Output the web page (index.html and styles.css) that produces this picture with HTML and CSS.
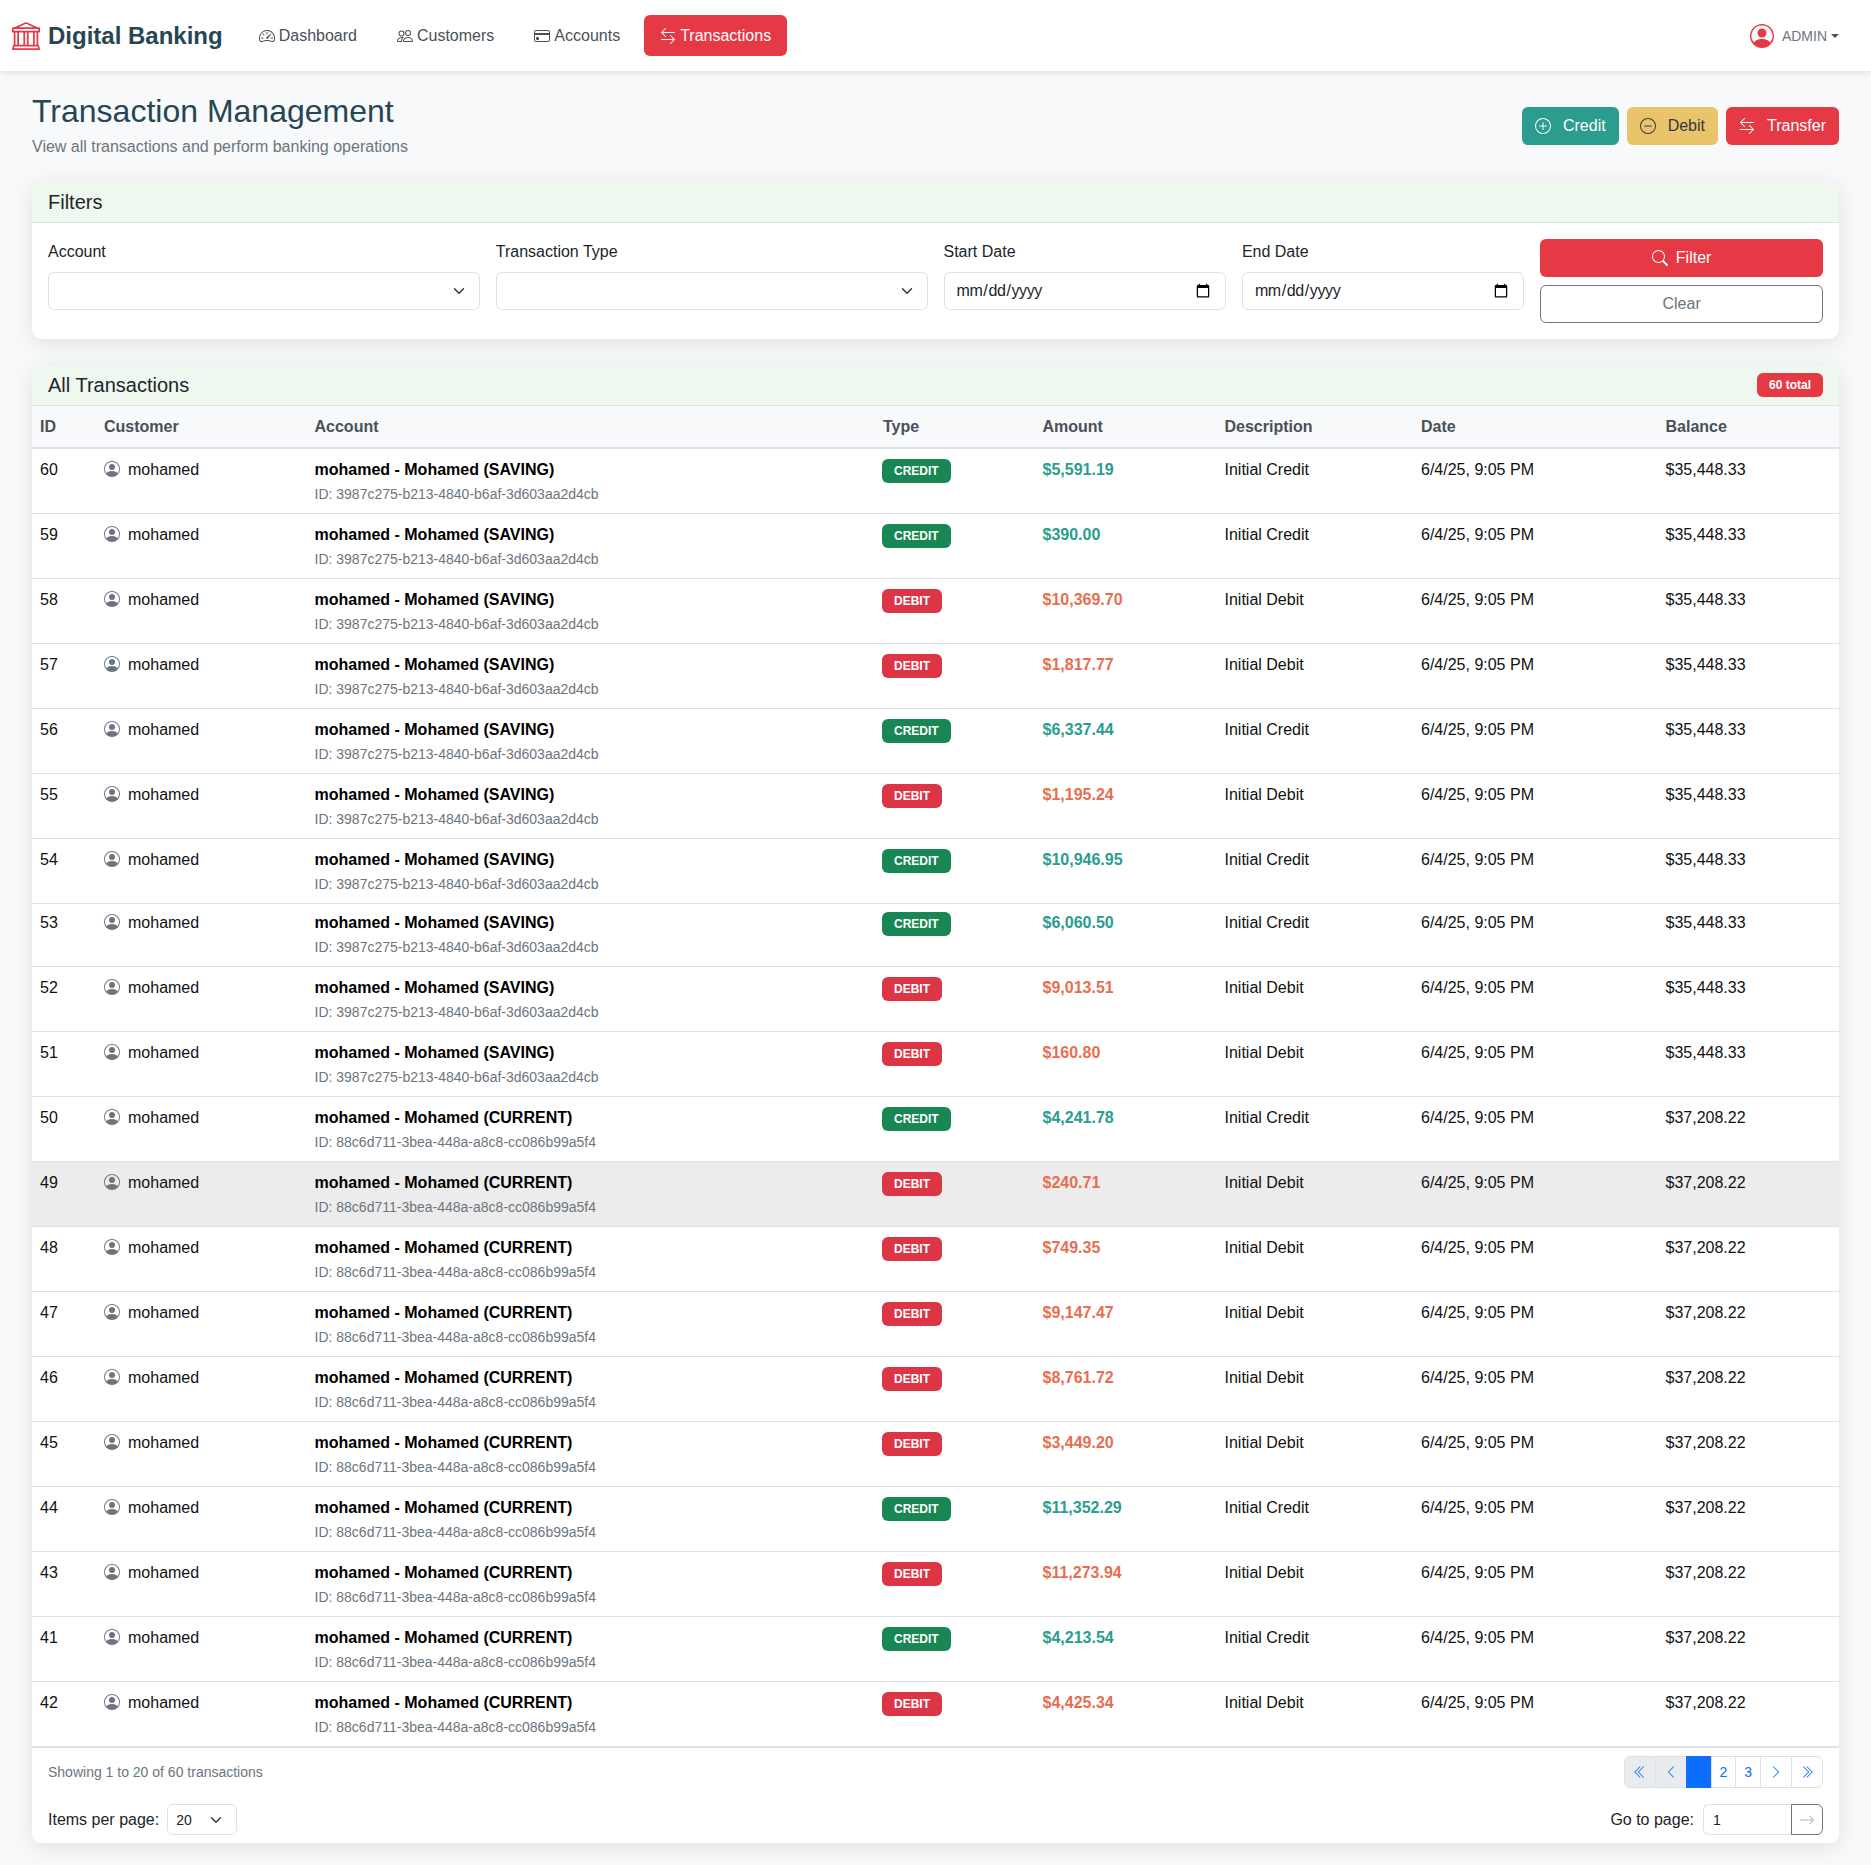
FILE: index.html
```html
<!DOCTYPE html>
<html lang="en">
<head>
    <meta charset="UTF-8">
    <meta name="viewport" content="width=device-width, initial-scale=1.0">
    <title>Digital Banking - Transactions</title>
    <link rel="stylesheet" href="styles.css">
</head>
<body>
    <!-- icon sprite -->
    <svg class="sprite" xmlns="http://www.w3.org/2000/svg">
        <symbol id="i-bank" viewBox="0 0 16 16"><path d="m8 0 6.61 3h.89a.5.5 0 0 1 .5.5v2a.5.5 0 0 1-.5.5H15v7a.5.5 0 0 1 .485.38l.5 2a.498.498 0 0 1-.485.62H.5a.498.498 0 0 1-.485-.62l.5-2A.5.5 0 0 1 1 13V6H.5a.5.5 0 0 1-.5-.5v-2A.5.5 0 0 1 .5 3h.89zM3.777 3h8.447L8 1zM2 6v7h1V6zm2 0v7h2.5V6zm3.5 0v7h1V6zm2 0v7H12V6zM13 6v7h1V6zm2-1V4H1v1zm-.39 9H1.39l-.25 1h13.72z"/></symbol>
        <symbol id="i-speed" viewBox="0 0 16 16"><path d="M8 4a.5.5 0 0 1 .5.5V6a.5.5 0 0 1-1 0V4.5A.5.5 0 0 1 8 4M3.732 5.732a.5.5 0 0 1 .707 0l.915.914a.5.5 0 1 1-.708.708l-.914-.915a.5.5 0 0 1 0-.707M2 10a.5.5 0 0 1 .5-.5h1.586a.5.5 0 0 1 0 1H2.5A.5.5 0 0 1 2 10m9.5 0a.5.5 0 0 1 .5-.5h1.5a.5.5 0 0 1 0 1H12a.5.5 0 0 1-.5-.5m.754-4.246a.39.39 0 0 0-.527-.02L7.547 9.31a.91.91 0 1 0 1.302 1.258l3.434-4.297a.39.39 0 0 0-.029-.518z"/><path fill-rule="evenodd" d="M0 10a8 8 0 1 1 15.547 2.661c-.442 1.253-1.845 1.602-2.932 1.25C11.309 13.488 9.475 13 8 13c-1.474 0-3.31.488-4.615.911-1.087.352-2.49.003-2.932-1.25A8 8 0 0 1 0 10m8-7a7 7 0 0 0-6.603 9.329c.203.575.923.876 1.68.63C4.397 12.533 6.358 12 8 12s3.604.532 4.923.96c.757.245 1.477-.056 1.68-.631A7 7 0 0 0 8 3"/></symbol>
        <symbol id="i-people" viewBox="0 0 16 16"><path d="M15 14s1 0 1-1-1-4-5-4-5 3-5 4 1 1 1 1zm-7.978-1L7 12.996c.001-.264.167-1.03.76-1.72C8.312 10.629 9.282 10 11 10c1.717 0 2.687.63 3.24 1.276.593.69.758 1.457.76 1.72l-.008.002-.014.002zM11 7a2 2 0 1 0 0-4 2 2 0 0 0 0 4m3-2a3 3 0 1 1-6 0 3 3 0 0 1 6 0M6.936 9.28a6 6 0 0 0-1.23-.247A7 7 0 0 0 5 9c-4 0-5 3-5 4q0 1 1 1h4.216A2.24 2.24 0 0 1 5 13c0-1.01.377-2.042 1.09-2.904.243-.294.526-.569.846-.816M4.92 10A5.5 5.5 0 0 0 4 13H1c0-.26.164-1.03.76-1.724.545-.636 1.492-1.256 3.16-1.275ZM1.5 5.5a3 3 0 1 1 6 0 3 3 0 0 1-6 0m3-2a2 2 0 1 0 0 4 2 2 0 0 0 0-4"/></symbol>
        <symbol id="i-card" viewBox="0 0 16 16"><path d="M0 4a2 2 0 0 1 2-2h12a2 2 0 0 1 2 2v8a2 2 0 0 1-2 2H2a2 2 0 0 1-2-2zm2-1a1 1 0 0 0-1 1v1h14V4a1 1 0 0 0-1-1zm13 4H1v5a1 1 0 0 0 1 1h12a1 1 0 0 0 1-1z"/><path d="M2 10a1 1 0 0 1 1-1h1a1 1 0 0 1 1 1v1a1 1 0 0 1-1 1H3a1 1 0 0 1-1-1z"/></symbol>
        <symbol id="i-swap" viewBox="0 0 16 16"><path fill-rule="evenodd" d="M1 11.5a.5.5 0 0 0 .5.5h11.793l-3.147 3.146a.5.5 0 0 0 .708.708l4-4a.5.5 0 0 0 0-.708l-4-4a.5.5 0 0 0-.708.708L13.293 11H1.5a.5.5 0 0 0-.5.5m14-7a.5.5 0 0 1-.5.5H2.707l3.147 3.146a.5.5 0 1 1-.708.708l-4-4a.5.5 0 0 1 0-.708l4-4a.5.5 0 1 1 .708.708L2.707 4H14.5a.5.5 0 0 1 .5.5"/></symbol>
        <symbol id="i-person" viewBox="0 0 16 16"><path d="M11 6a3 3 0 1 1-6 0 3 3 0 0 1 6 0"/><path fill-rule="evenodd" d="M0 8a8 8 0 1 1 16 0A8 8 0 0 1 0 8m8-7a7 7 0 0 0-5.468 11.37C3.242 11.226 4.805 10 8 10s4.757 1.225 5.468 2.37A7 7 0 0 0 8 1"/></symbol>
        <symbol id="i-plus" viewBox="0 0 16 16"><path d="M8 15A7 7 0 1 1 8 1a7 7 0 0 1 0 14m0 1A8 8 0 1 0 8 0a8 8 0 0 0 0 16"/><path d="M8 4a.5.5 0 0 1 .5.5v3h3a.5.5 0 0 1 0 1h-3v3a.5.5 0 0 1-1 0v-3h-3a.5.5 0 0 1 0-1h3v-3A.5.5 0 0 1 8 4"/></symbol>
        <symbol id="i-minus" viewBox="0 0 16 16"><path d="M8 15A7 7 0 1 1 8 1a7 7 0 0 1 0 14m0 1A8 8 0 1 0 8 0a8 8 0 0 0 0 16"/><path d="M4 8a.5.5 0 0 1 .5-.5h7a.5.5 0 0 1 0 1h-7A.5.5 0 0 1 4 8"/></symbol>
        <symbol id="i-search" viewBox="0 0 16 16"><path d="M11.742 10.344a6.5 6.5 0 1 0-1.397 1.398h-.001q.044.06.098.115l3.85 3.85a1 1 0 0 0 1.415-1.414l-3.85-3.85a1 1 0 0 0-.115-.1zM12 6.5a5.5 5.5 0 1 1-11 0 5.5 5.5 0 0 1 11 0"/></symbol>
        <symbol id="i-first" viewBox="0 0 16 16"><path fill-rule="evenodd" d="M8.354 1.646a.5.5 0 0 1 0 .708L2.707 8l5.647 5.646a.5.5 0 0 1-.708.708l-6-6a.5.5 0 0 1 0-.708l6-6a.5.5 0 0 1 .708 0"/><path fill-rule="evenodd" d="M12.354 1.646a.5.5 0 0 1 0 .708L6.707 8l5.647 5.646a.5.5 0 0 1-.708.708l-6-6a.5.5 0 0 1 0-.708l6-6a.5.5 0 0 1 .708 0"/></symbol>
        <symbol id="i-prev" viewBox="0 0 16 16"><path fill-rule="evenodd" d="M11.354 1.646a.5.5 0 0 1 0 .708L5.707 8l5.647 5.646a.5.5 0 0 1-.708.708l-6-6a.5.5 0 0 1 0-.708l6-6a.5.5 0 0 1 .708 0"/></symbol>
        <symbol id="i-next" viewBox="0 0 16 16"><path fill-rule="evenodd" d="M4.646 1.646a.5.5 0 0 1 .708 0l6 6a.5.5 0 0 1 0 .708l-6 6a.5.5 0 0 1-.708-.708L10.293 8 4.646 2.354a.5.5 0 0 1 0-.708"/></symbol>
        <symbol id="i-last" viewBox="0 0 16 16"><path fill-rule="evenodd" d="M3.646 1.646a.5.5 0 0 1 .708 0l6 6a.5.5 0 0 1 0 .708l-6 6a.5.5 0 0 1-.708-.708L9.293 8 3.646 2.354a.5.5 0 0 1 0-.708"/><path fill-rule="evenodd" d="M7.646 1.646a.5.5 0 0 1 .708 0l6 6a.5.5 0 0 1 0 .708l-6 6a.5.5 0 0 1-.708-.708L13.293 8 7.646 2.354a.5.5 0 0 1 0-.708"/></symbol>
        <symbol id="i-go" viewBox="0 0 16 16"><path fill-rule="evenodd" d="M1 8a.5.5 0 0 1 .5-.5h11.793l-3.147-3.146a.5.5 0 0 1 .708-.708l4 4a.5.5 0 0 1 0 .708l-4 4a.5.5 0 0 1-.708-.708L13.293 8.5H1.5A.5.5 0 0 1 1 8"/></symbol>
    </svg>

    <nav class="navbar">
        <a class="brand" href="#"><svg class="brand-icon"><use href="#i-bank"/></svg>Digital Banking</a>
        <a class="nav-link" href="#"><svg class="icon"><use href="#i-speed"/></svg>Dashboard</a>
        <a class="nav-link" href="#"><svg class="icon"><use href="#i-people"/></svg>Customers</a>
        <a class="nav-link" href="#"><svg class="icon"><use href="#i-card"/></svg>Accounts</a>
        <a class="nav-link active" href="#"><svg class="icon"><use href="#i-swap"/></svg>Transactions</a>
        <a class="user-menu" href="#"><svg class="user-icon"><use href="#i-person"/></svg>ADMIN<span class="caret"></span></a>
    </nav>

    <main class="page">
        <div class="page-head">
            <div>
                <h2 class="page-title">Transaction Management</h2>
                <p class="page-sub">View all transactions and perform banking operations</p>
            </div>
            <div class="page-actions">
                <a class="btn btn-credit" href="#"><svg class="icon"><use href="#i-plus"/></svg>Credit</a>
                <a class="btn btn-debit" href="#"><svg class="icon"><use href="#i-minus"/></svg>Debit</a>
                <a class="btn btn-transfer" href="#"><svg class="icon"><use href="#i-swap"/></svg>Transfer</a>
            </div>
        </div>

        <section class="card filters">
            <div class="card-header"><h5>Filters</h5></div>
            <form class="filter-row">
                <div class="filter-col">
                    <label>Account</label>
                    <select class="field"><option></option></select>
                </div>
                <div class="filter-col">
                    <label>Transaction Type</label>
                    <select class="field"><option></option></select>
                </div>
                <div class="filter-col">
                    <label>Start Date</label>
                    <input class="field" type="date">
                </div>
                <div class="filter-col">
                    <label>End Date</label>
                    <input class="field" type="date">
                </div>
                <div class="filter-col filter-btns">
                    <button class="btn btn-transfer" type="button"><svg class="icon"><use href="#i-search"/></svg>Filter</button>
                    <button class="btn btn-clear" type="button">Clear</button>
                </div>
            </form>
        </section>

        <section class="card">
            <div class="card-header">
                <h5>All Transactions</h5>
                <span class="total-badge">60 total</span>
            </div>
            <table class="tx-table">
                <colgroup>
                    <col class="c-id"><col class="c-customer"><col class="c-account"><col class="c-type">
                    <col class="c-amount"><col class="c-desc"><col class="c-date"><col class="c-balance">
                </colgroup>
                <thead>
                    <tr><th>ID</th><th>Customer</th><th>Account</th><th>Type</th><th>Amount</th><th>Description</th><th>Date</th><th>Balance</th></tr>
                </thead>
                <tbody>
                    <tr><td>60</td><td><svg class="person"><use href="#i-person"/></svg>mohamed</td><td><b>mohamed - Mohamed (SAVING)</b><small>ID: 3987c275-b213-4840-b6af-3d603aa2d4cb</small></td><td><span class="badge credit">CREDIT</span></td><td class="amt-credit">$5,591.19</td><td>Initial Credit</td><td>6/4/25, 9:05 PM</td><td>$35,448.33</td></tr>
                    <tr><td>59</td><td><svg class="person"><use href="#i-person"/></svg>mohamed</td><td><b>mohamed - Mohamed (SAVING)</b><small>ID: 3987c275-b213-4840-b6af-3d603aa2d4cb</small></td><td><span class="badge credit">CREDIT</span></td><td class="amt-credit">$390.00</td><td>Initial Credit</td><td>6/4/25, 9:05 PM</td><td>$35,448.33</td></tr>
                    <tr><td>58</td><td><svg class="person"><use href="#i-person"/></svg>mohamed</td><td><b>mohamed - Mohamed (SAVING)</b><small>ID: 3987c275-b213-4840-b6af-3d603aa2d4cb</small></td><td><span class="badge debit">DEBIT</span></td><td class="amt-debit">$10,369.70</td><td>Initial Debit</td><td>6/4/25, 9:05 PM</td><td>$35,448.33</td></tr>
                    <tr><td>57</td><td><svg class="person"><use href="#i-person"/></svg>mohamed</td><td><b>mohamed - Mohamed (SAVING)</b><small>ID: 3987c275-b213-4840-b6af-3d603aa2d4cb</small></td><td><span class="badge debit">DEBIT</span></td><td class="amt-debit">$1,817.77</td><td>Initial Debit</td><td>6/4/25, 9:05 PM</td><td>$35,448.33</td></tr>
                    <tr><td>56</td><td><svg class="person"><use href="#i-person"/></svg>mohamed</td><td><b>mohamed - Mohamed (SAVING)</b><small>ID: 3987c275-b213-4840-b6af-3d603aa2d4cb</small></td><td><span class="badge credit">CREDIT</span></td><td class="amt-credit">$6,337.44</td><td>Initial Credit</td><td>6/4/25, 9:05 PM</td><td>$35,448.33</td></tr>
                    <tr><td>55</td><td><svg class="person"><use href="#i-person"/></svg>mohamed</td><td><b>mohamed - Mohamed (SAVING)</b><small>ID: 3987c275-b213-4840-b6af-3d603aa2d4cb</small></td><td><span class="badge debit">DEBIT</span></td><td class="amt-debit">$1,195.24</td><td>Initial Debit</td><td>6/4/25, 9:05 PM</td><td>$35,448.33</td></tr>
                    <tr><td>54</td><td><svg class="person"><use href="#i-person"/></svg>mohamed</td><td><b>mohamed - Mohamed (SAVING)</b><small>ID: 3987c275-b213-4840-b6af-3d603aa2d4cb</small></td><td><span class="badge credit">CREDIT</span></td><td class="amt-credit">$10,946.95</td><td>Initial Credit</td><td>6/4/25, 9:05 PM</td><td>$35,448.33</td></tr>
                    <tr class="row-short"><td>53</td><td><svg class="person"><use href="#i-person"/></svg>mohamed</td><td><b>mohamed - Mohamed (SAVING)</b><small>ID: 3987c275-b213-4840-b6af-3d603aa2d4cb</small></td><td><span class="badge credit">CREDIT</span></td><td class="amt-credit">$6,060.50</td><td>Initial Credit</td><td>6/4/25, 9:05 PM</td><td>$35,448.33</td></tr>
                    <tr><td>52</td><td><svg class="person"><use href="#i-person"/></svg>mohamed</td><td><b>mohamed - Mohamed (SAVING)</b><small>ID: 3987c275-b213-4840-b6af-3d603aa2d4cb</small></td><td><span class="badge debit">DEBIT</span></td><td class="amt-debit">$9,013.51</td><td>Initial Debit</td><td>6/4/25, 9:05 PM</td><td>$35,448.33</td></tr>
                    <tr><td>51</td><td><svg class="person"><use href="#i-person"/></svg>mohamed</td><td><b>mohamed - Mohamed (SAVING)</b><small>ID: 3987c275-b213-4840-b6af-3d603aa2d4cb</small></td><td><span class="badge debit">DEBIT</span></td><td class="amt-debit">$160.80</td><td>Initial Debit</td><td>6/4/25, 9:05 PM</td><td>$35,448.33</td></tr>
                    <tr><td>50</td><td><svg class="person"><use href="#i-person"/></svg>mohamed</td><td><b>mohamed - Mohamed (CURRENT)</b><small>ID: 88c6d711-3bea-448a-a8c8-cc086b99a5f4</small></td><td><span class="badge credit">CREDIT</span></td><td class="amt-credit">$4,241.78</td><td>Initial Credit</td><td>6/4/25, 9:05 PM</td><td>$37,208.22</td></tr>
                    <tr class="row-hover"><td>49</td><td><svg class="person"><use href="#i-person"/></svg>mohamed</td><td><b>mohamed - Mohamed (CURRENT)</b><small>ID: 88c6d711-3bea-448a-a8c8-cc086b99a5f4</small></td><td><span class="badge debit">DEBIT</span></td><td class="amt-debit">$240.71</td><td>Initial Debit</td><td>6/4/25, 9:05 PM</td><td>$37,208.22</td></tr>
                    <tr><td>48</td><td><svg class="person"><use href="#i-person"/></svg>mohamed</td><td><b>mohamed - Mohamed (CURRENT)</b><small>ID: 88c6d711-3bea-448a-a8c8-cc086b99a5f4</small></td><td><span class="badge debit">DEBIT</span></td><td class="amt-debit">$749.35</td><td>Initial Debit</td><td>6/4/25, 9:05 PM</td><td>$37,208.22</td></tr>
                    <tr><td>47</td><td><svg class="person"><use href="#i-person"/></svg>mohamed</td><td><b>mohamed - Mohamed (CURRENT)</b><small>ID: 88c6d711-3bea-448a-a8c8-cc086b99a5f4</small></td><td><span class="badge debit">DEBIT</span></td><td class="amt-debit">$9,147.47</td><td>Initial Debit</td><td>6/4/25, 9:05 PM</td><td>$37,208.22</td></tr>
                    <tr><td>46</td><td><svg class="person"><use href="#i-person"/></svg>mohamed</td><td><b>mohamed - Mohamed (CURRENT)</b><small>ID: 88c6d711-3bea-448a-a8c8-cc086b99a5f4</small></td><td><span class="badge debit">DEBIT</span></td><td class="amt-debit">$8,761.72</td><td>Initial Debit</td><td>6/4/25, 9:05 PM</td><td>$37,208.22</td></tr>
                    <tr><td>45</td><td><svg class="person"><use href="#i-person"/></svg>mohamed</td><td><b>mohamed - Mohamed (CURRENT)</b><small>ID: 88c6d711-3bea-448a-a8c8-cc086b99a5f4</small></td><td><span class="badge debit">DEBIT</span></td><td class="amt-debit">$3,449.20</td><td>Initial Debit</td><td>6/4/25, 9:05 PM</td><td>$37,208.22</td></tr>
                    <tr><td>44</td><td><svg class="person"><use href="#i-person"/></svg>mohamed</td><td><b>mohamed - Mohamed (CURRENT)</b><small>ID: 88c6d711-3bea-448a-a8c8-cc086b99a5f4</small></td><td><span class="badge credit">CREDIT</span></td><td class="amt-credit">$11,352.29</td><td>Initial Credit</td><td>6/4/25, 9:05 PM</td><td>$37,208.22</td></tr>
                    <tr><td>43</td><td><svg class="person"><use href="#i-person"/></svg>mohamed</td><td><b>mohamed - Mohamed (CURRENT)</b><small>ID: 88c6d711-3bea-448a-a8c8-cc086b99a5f4</small></td><td><span class="badge debit">DEBIT</span></td><td class="amt-debit">$11,273.94</td><td>Initial Debit</td><td>6/4/25, 9:05 PM</td><td>$37,208.22</td></tr>
                    <tr><td>41</td><td><svg class="person"><use href="#i-person"/></svg>mohamed</td><td><b>mohamed - Mohamed (CURRENT)</b><small>ID: 88c6d711-3bea-448a-a8c8-cc086b99a5f4</small></td><td><span class="badge credit">CREDIT</span></td><td class="amt-credit">$4,213.54</td><td>Initial Credit</td><td>6/4/25, 9:05 PM</td><td>$37,208.22</td></tr>
                    <tr><td>42</td><td><svg class="person"><use href="#i-person"/></svg>mohamed</td><td><b>mohamed - Mohamed (CURRENT)</b><small>ID: 88c6d711-3bea-448a-a8c8-cc086b99a5f4</small></td><td><span class="badge debit">DEBIT</span></td><td class="amt-debit">$4,425.34</td><td>Initial Debit</td><td>6/4/25, 9:05 PM</td><td>$37,208.22</td></tr>
                </tbody>
            </table>

            <div class="table-foot">
                <div class="foot-row">
                    <span class="showing">Showing 1 to 20 of 60 transactions</span>
                    <ul class="pager">
                        <li class="pg-icon off"><svg class="pg-svg"><use href="#i-first"/></svg></li>
                        <li class="pg-icon off"><svg class="pg-svg"><use href="#i-prev"/></svg></li>
                        <li class="pg-num current"></li>
                        <li class="pg-num">2</li>
                        <li class="pg-num">3</li>
                        <li class="pg-icon"><svg class="pg-svg"><use href="#i-next"/></svg></li>
                        <li class="pg-icon"><svg class="pg-svg"><use href="#i-last"/></svg></li>
                    </ul>
                </div>
                <div class="foot-row foot-row-2">
                    <div class="per-page">
                        <label>Items per page:</label>
                        <select class="field-sm"><option>20</option></select>
                    </div>
                    <div class="go-page">
                        <label>Go to page:</label>
                        <input class="go-input" type="text" value="1">
                        <button class="go-btn" type="button"><svg class="icon"><use href="#i-go"/></svg></button>
                    </div>
                </div>
            </div>
        </section>
    </main>
</body>
</html>
```

FILE: styles.css
```css
* {
    box-sizing: border-box;
}
body {
    margin: 0;
    font-family: "Liberation Sans", Arial, sans-serif;
    font-size: 16px;
    line-height: 24px;
    color: #212529;
    background-color: #f8f9fa;
}
a {
    text-decoration: none;
}
.sprite {
    display: none;
}
.icon {
    width: 16px;
    height: 16px;
    fill: currentColor;
    flex: none;
}

/* navbar */
.navbar {
    display: flex;
    align-items: center;
    gap: 8px;
    height: 71px;
    padding: 0 32px 0 12px;
    background-color: #fff;
    box-shadow: 0 2px 6px rgba(0, 0, 0, 0.1);
}
.brand {
    display: flex;
    align-items: center;
    gap: 8px;
    margin-right: 12px;
    font-size: 24px;
    font-weight: 700;
    color: #264653;
}
.brand-icon {
    width: 28px;
    height: 28px;
    fill: #e63946;
}
.nav-link {
    display: flex;
    align-items: center;
    gap: 4px;
    height: 41px;
    padding: 0 16px;
    border-radius: 6px;
    color: #495057;
}
.nav-link.active {
    background-color: #e63946;
    color: #fff;
}
.user-menu {
    display: flex;
    align-items: center;
    margin-left: auto;
    font-size: 14px;
    color: #6c757d;
}
.user-icon {
    width: 24px;
    height: 24px;
    margin-right: 8px;
    fill: #e63946;
}
.caret {
    margin-left: 4px;
    border-top: 4px solid #495057;
    border-left: 4px solid transparent;
    border-right: 4px solid transparent;
}

/* page head */
.page {
    padding: 21px 32px 22px;
}
.page-head {
    display: flex;
    justify-content: space-between;
    align-items: center;
    margin-bottom: 23px;
}
.page-title {
    margin: 0 0 5px;
    font-size: 32px;
    font-weight: 400;
    line-height: 38px;
    color: #264653;
}
.page-sub {
    margin: 0;
    color: #6c757d;
}
.page-actions {
    display: flex;
    gap: 8px;
}
.btn {
    display: flex;
    align-items: center;
    justify-content: center;
    height: 38px;
    padding: 0 12px;
    border: 1px solid transparent;
    border-radius: 6px;
    font-family: inherit;
    font-size: 16px;
    cursor: pointer;
}
.btn .icon {
    margin-right: 12px;
}
.btn-credit {
    background-color: #2a9d8f;
    color: #fff;
}
.btn-debit {
    background-color: #e9c46a;
    color: #343a40;
}
.btn-transfer {
    background-color: #e63946;
    color: #fff;
}
.btn-clear {
    background-color: #fff;
    border-color: #6c757d;
    color: #6c757d;
}

/* cards */
.card {
    margin-bottom: 26px;
    background-color: #fff;
    border-radius: 10px;
    box-shadow: 0 4px 20px rgba(0, 0, 0, 0.1);
    overflow: hidden;
}
.card:last-child {
    margin-bottom: 0;
    border-radius: 8px;
}
.card-header {
    display: flex;
    justify-content: space-between;
    align-items: center;
    height: 41px;
    padding: 0 16px;
    background-color: #eff8ef;
    border-bottom: 1px solid #dee2e6;
}
.card-header h5 {
    margin: 0;
    font-size: 20px;
    font-weight: 400;
    line-height: 24px;
}
.total-badge {
    padding: 0 12px;
    border-radius: 6px;
    background-color: #e63946;
    color: #fff;
    font-size: 12px;
    font-weight: 700;
}

/* filters */
.filter-row {
    display: grid;
    grid-template-columns: 25% 25% 16.66% 16.66% auto;
    margin: 0 -8px;
    padding: 16px 16px;
}
.filter-col {
    padding: 0 8px;
}
.filter-col label {
    display: block;
    padding-top: 1px;
    margin-bottom: 8px;
}
.field {
    display: block;
    width: 100%;
    height: 38px;
    padding: 6px 12px;
    border: 1px solid #dee2e6;
    border-radius: 6px;
    background-color: #fff;
    font-family: inherit;
    font-size: 16px;
    color: #212529;
}
.field::-webkit-datetime-edit {
    margin-left: -1px;
    letter-spacing: -0.4px;
}
select.field,
.field-sm {
    appearance: none;
    background-image: url("data:image/svg+xml,%3csvg xmlns='http://www.w3.org/2000/svg' viewBox='0 0 16 16'%3e%3cpath fill='none' stroke='%23343a40' stroke-linecap='round' stroke-linejoin='round' stroke-width='2' d='m2 5 6 6 6-6'/%3e%3c/svg%3e");
    background-repeat: no-repeat;
    background-position: right 12px center;
    background-size: 16px 12px;
}
.filter-btns {
    display: flex;
    flex-direction: column;
    gap: 8px;
}
.filter-btns .btn {
    width: 100%;
}
.filter-btns .icon {
    margin-right: 8px;
}

/* table */
.tx-table {
    width: 100%;
    border-collapse: collapse;
    table-layout: fixed;
}
.c-id { width: 64px; }
.c-customer { width: 210.5px; }
.c-account { width: 568.5px; }
.c-type { width: 159.5px; }
.c-amount { width: 182px; }
.c-desc { width: 196.5px; }
.c-date { width: 244.5px; }
.c-balance { width: 181.5px; }
.tx-table th {
    height: 42px;
    padding: 8px;
    text-align: left;
    font-weight: 700;
    color: #495057;
    background-color: #f8f9fa;
    border-bottom: 2px solid #dee2e6;
}
.tx-table td {
    padding: 9px 8px 8px;
    vertical-align: top;
    border-bottom: 1px solid #dee2e6;
    color: #111;
}
.tx-table b {
    display: block;
    color: #000;
}
.tx-table small {
    display: block;
    margin-top: 2px;
    font-size: 14px;
    line-height: 21px;
    color: #6c757d;
}
.tx-table .row-short td {
    padding-top: 7px;
}
.row-hover td {
    background-color: #ececec;
}
.person {
    width: 16px;
    height: 16px;
    margin-right: 8px;
    fill: #6c757d;
    vertical-align: -2px;
}
.badge {
    display: inline-block;
    margin: 1px 0 0 -1px;
    padding: 0 12px;
    border-radius: 6px;
    font-size: 12px;
    font-weight: 700;
    line-height: 24px;
    vertical-align: top;
    color: #fff;
}
.badge.credit {
    background-color: #198754;
}
.badge.debit {
    background-color: #dc3545;
}
.tx-table .amt-credit {
    font-weight: 700;
    color: #2a9d8f;
}
.tx-table .amt-debit {
    font-weight: 700;
    color: #e76f51;
}

/* pagination footer */
.table-foot {
    padding: 8px 16px 8px;
    border-top: 1px solid #dee2e6;
}
.foot-row {
    display: flex;
    justify-content: space-between;
    align-items: center;
}
.foot-row-2 {
    margin-top: 16px;
}
.showing {
    font-size: 14px;
    color: #6c757d;
}
.pager {
    display: flex;
    height: 32px;
    margin: 0;
    padding: 0;
    list-style: none;
    font-size: 14px;
    color: #0d6efd;
}
.pager li {
    display: flex;
    align-items: center;
    justify-content: center;
    margin-left: -1px;
    background-color: #fff;
    border: 1px solid #dee2e6;
}
.pager li:first-child {
    margin-left: 0;
    border-radius: 6px 0 0 6px;
}
.pager li:last-child {
    border-radius: 0 6px 6px 0;
}
.pg-num {
    width: 25.7px;
}
.pg-icon {
    width: 32px;
}
.pg-svg {
    width: 14px;
    height: 14px;
    fill: currentColor;
}
.pager .off {
    background-color: #e9ecef;
}
.pager .current {
    background-color: #0d6efd;
    border-color: #0d6efd;
}
.per-page,
.go-page {
    display: flex;
    align-items: center;
}
.per-page label {
    margin-right: 8px;
}
.go-page label {
    margin-right: 9px;
}
.field-sm {
    width: 70px;
    height: 31px;
    padding: 0 8px;
    border: 1px solid #dee2e6;
    border-radius: 6px;
    background-color: #fff;
    font-family: inherit;
    font-size: 14px;
    color: #212529;
}
.go-input {
    width: 88px;
    height: 31px;
    padding: 0 9px;
    border: 1px solid #dee2e6;
    border-right: 0;
    border-radius: 6px 0 0 6px;
    font-family: inherit;
    font-size: 14px;
    color: #212529;
}
.go-btn {
    display: flex;
    align-items: center;
    justify-content: center;
    width: 32px;
    height: 31px;
    padding: 0;
    border: 1px solid #6c757d;
    border-radius: 0 6px 6px 0;
    background-color: #fff;
    color: #adb5bd;
}
```
